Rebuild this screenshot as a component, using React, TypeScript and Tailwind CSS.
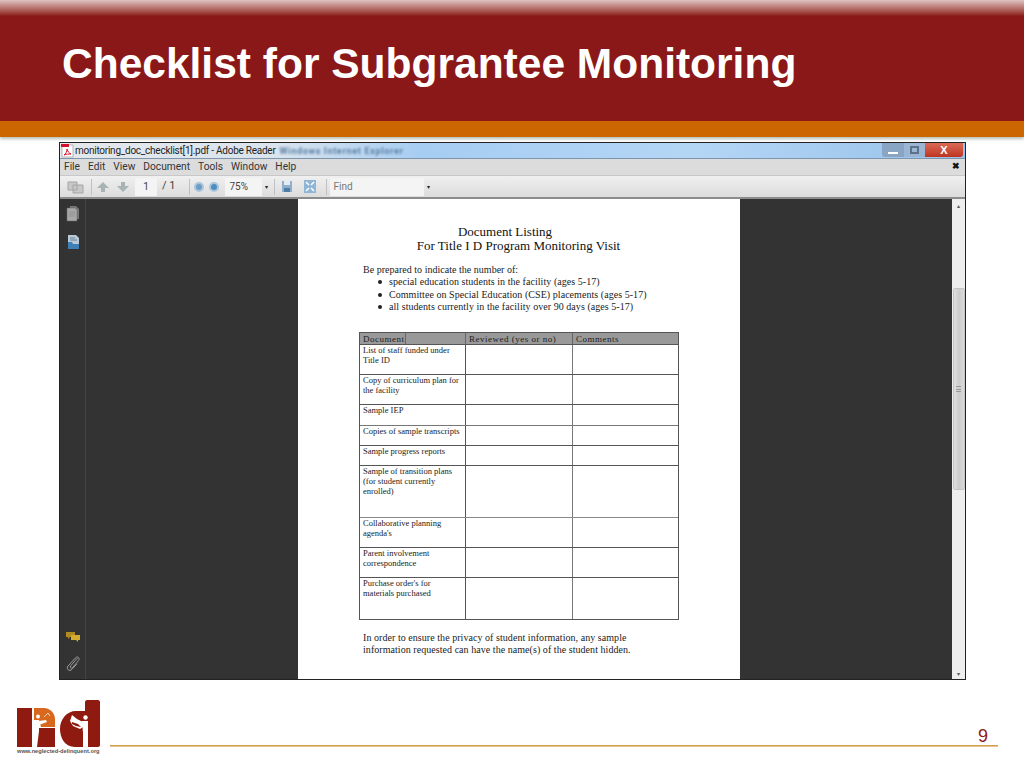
import React from 'react';

const serif = 'font-["Liberation_Serif",serif]';

const rows: [string[], string, string][] = [
  [['List of staff funded under', 'Title ID'], 'h-[30px]', 'border-[#555]'],
  [['Copy of curriculum plan for', 'the facility'], 'h-[30px]', 'border-[#555]'],
  [['Sample IEP'], 'h-[21px]', 'border-[#777]'],
  [['Copies of sample transcripts'], 'h-[20px]', 'border-[#555]'],
  [['Sample progress reports'], 'h-[20px]', 'border-[#555]'],
  [['Sample of transition plans', '(for student currently', 'enrolled)'], 'h-[52px]', 'border-[#888]'],
  [['Collaborative planning', "agenda's"], 'h-[30px]', 'border-[#555]'],
  [['Parent involvement', 'correspondence'], 'h-[30px]', 'border-[#555]'],
  [["Purchase order's for", 'materials purchased'], 'h-[41px]', 'border-[#555]'],
];

function SideIcon({ kind }: { kind: 'page' | 'doc' | 'chat' | 'clip' }) {
  if (kind === 'page') {
    return (
      <svg width="14" height="16" viewBox="0 0 14 16">
        <path d="M4 0h6l3 3v10H4z" fill="#777" />
        <path d="M1 2h8l2 2v11H1z" fill="#a8a8a8" stroke="#666" strokeWidth="0.500" />
        <path d="M3 6h6M3 8h6M3 10h6" stroke="#8a8a8a" strokeWidth="0.700" />
      </svg>
    );
  }
  if (kind === 'doc') {
    return (
      <svg width="14" height="16" viewBox="0 0 14 16">
        <path d="M2 1h8l3 3v11H2z" fill="#b9c9d8" />
        <path d="M2 8h4l1 2h6v5H2z" fill="#3f7fb5" />
        <path d="M4 4h5M4 6h7" stroke="#6a8298" />
      </svg>
    );
  }
  if (kind === 'chat') {
    return (
      <svg width="16" height="12" viewBox="0 0 16 12">
        <path d="M1 1h9v5H5L3 8V6H1z" fill="#b08c1e" />
        <path d="M6 4h9v5h-2v2l-2-2H6z" fill="#d3ad30" />
      </svg>
    );
  }
  return (
    <svg width="16" height="18" viewBox="0 0 16 18" fill="none">
      <path d="M12.500 4 5.500 12c-1.200 1.500.8 3 2 1.600l6-7c2-2.400-1-5-3-2.800L3 12c-2.400 3 1.500 6 4 3.300l5-5.500" stroke="#9a9a9a" strokeWidth="1" />
    </svg>
  );
}

function Logo() {
  return (
    <div className="flex flex-col items-start w-[84px] ml-[1px]">
      <svg width="84" height="47" viewBox="0 0 84 47">
        {/* n */}
        <path d="M0 8h15v39H0z" fill="#8e1a10" />
        <path d="M20 28h18v19H20z" fill="#8e1a10" />
        <path d="M17 8h10c6 0 11 5 11 11v8H24l-2-7h-5z" fill="#d9681f" />
        <circle cx="21" cy="16.500" r="2" fill="#fff" />
        <path d="M15 21h7l7-1 1 2-8 3v6l-2 16h-3l-1-16-1-4z" fill="#fff" />
        <path d="M27 17l4-4 2 3" fill="none" stroke="#fff" strokeWidth="0.700" />
        {/* d */}
        <path d="M68 2c0-1 1-2 2-2h11c1 0 2 1 2 2v43c0 1-1 2-2 2H58c-10 0-15-9-15-18 0-10 7-18 16-18h9z" fill="#8e1a10" />
        <circle cx="68.500" cy="17.500" r="2.200" fill="#fff" />
        <path d="M65 21h6v26h-5V33z" fill="#fff" />
        <path d="M55 15l5 4 6 3v5l-3 2-7-3-3-5z" fill="#fff" />
        <path d="M55 22l6 2 3 3-5-1-4-2z" fill="#8e1a10" />
      </svg>
      <span className="text-[5.700px] leading-[8px] font-bold text-[#555] font-['Liberation_Sans',sans-serif] whitespace-nowrap">
        www.neglected-delinquent.org
      </span>
    </div>
  );
}

export default function App() {
  return (
    <div className="w-[1024px] h-[768px] bg-white flex flex-col overflow-hidden font-['Liberation_Sans',sans-serif]">
      {/* slide header */}
      <div className="h-[137px] shrink-0 flex flex-col shadow-[0_2px_3px_rgba(90,110,90,0.45)]">
        <div className="h-[16px] bg-gradient-to-b from-[#dcc4c4] to-[#8b1a1a]" />
        <div className="h-[105px] bg-[#8b1819] pl-[62px] pt-[22px]">
          <h1 className="text-[42.500px] leading-[52px] font-bold text-white whitespace-nowrap">Checklist for Subgrantee Monitoring</h1>
        </div>
        <div className="h-[16px] bg-[#cc6600]" />
      </div>

      {/* screenshot of the reader window */}
      <div className="ml-[59px] mt-[5px] w-[907px] h-[538px] border border-[#222] flex flex-col shrink-0 text-[#333]">
        <div className="h-[16px] shrink-0 flex items-center justify-between bg-[linear-gradient(90deg,#e4e8ec_0%,#d9e4ee_24%,#a6cdf2_40%,#b4d6f5_70%,#98c2ea_100%)] border-b border-[#7d95ad]">
          <div className="flex items-center gap-[1px] pl-[1px]">
            <svg width="13" height="14" viewBox="0 0 13 14">
              <path d="M1 1h11v12H1z" fill="#fff" stroke="#999" strokeWidth="0.700" />
              <path d="M0 0h8v3H0z" fill="#d3132b" />
              <path d="M3 11c2-1 3-4 3-6 1 3 2 4 4 5-2 0-5 0-7 1z" fill="none" stroke="#d3132b" />
            </svg>
            <span className="text-[10px] tracking-[-0.25px] leading-[14px] text-[#222] font-['Roboto',sans-serif] whitespace-nowrap">monitoring_doc_checklist[1].pdf - Adobe Reader</span>
            <span className="ml-[3px] text-[9px] leading-[14px] text-[#5a7da3] blur-[1px] font-['Roboto',sans-serif] font-bold whitespace-nowrap tracking-[0.7px]">Windows Internet Explorer</span>
          </div>
          <div className="flex items-start h-full pr-[2px]">
            <div className="w-[22px] h-[14px] bg-[#8aa5c4] rounded-bl-[3px] flex items-end justify-center pb-[3px]">
              <div className="w-[10px] h-[2px] bg-white" />
            </div>
            <div className="w-[21px] h-[14px] bg-[#9ab6d4] flex items-center justify-center">
              <div className="w-[9px] h-[8px] border-2 border-[#5d7288]" />
            </div>
            <div className="w-[38px] h-[14px] bg-gradient-to-b from-[#d96a56] to-[#bf3320] rounded-br-[3px] flex items-center justify-center text-white text-[11px] leading-none font-bold">
              X
            </div>
          </div>
        </div>

        <div className="h-[17px] shrink-0 flex items-center bg-[#dcdcdc] pl-[4px] pr-[5px] border-b border-[#c8c8c8] text-[10.200px] text-[#333] font-['Roboto',sans-serif] gap-[8px]">
          <span>File</span>
          <span>Edit</span>
          <span>View</span>
          <span>Document</span>
          <span>Tools</span>
          <span>Window</span>
          <span>Help</span>
          <span className="ml-auto text-[9px] font-bold text-[#111]">✖</span>
        </div>

        <div className="h-[23px] shrink-0 flex items-center bg-gradient-to-b from-[#f0f0f0] to-[#dcdcdc] border-b-2 border-[#8c8c8c] pl-[7px] font-['Roboto',sans-serif] text-[10px] text-[#444]">
          <svg width="18" height="14" viewBox="0 0 18 14" className="mr-[6px]">
            <path d="M1 2h9v8H1zM6 5h10v8H6z" fill="#c8c8c8" stroke="#a5a5a5" />
          </svg>
          <div className="w-px h-[16px] bg-[#c0c0c0] mr-[4px]" />
          <svg width="36" height="12" viewBox="0 0 36 12" className="mr-[3px]">
            <path d="M7 1l6 6H9v4H5V7H1zM27 11l6-6h-4V1h-4v4h-4z" fill="#a8b4b4" />
          </svg>
          <div className="w-[22px] h-[18px] bg-[#f4f4f4] flex items-center justify-center mr-[5px]">1</div>
          <span className="mr-[14px] text-[11px]">/ 1</span>
          <div className="w-px h-[16px] bg-[#c0c0c0] mr-[4px]" />
          <div className="w-[10px] h-[10px] rounded-full bg-[#6d9cc4] border-2 border-[#a9c6de] mr-[5px]" />
          <div className="w-[10px] h-[10px] rounded-full bg-[#4f8cc0] border-2 border-[#a9c6de] mr-[6px]" />
          <div className="w-[37px] h-[18px] bg-[#f4f4f4] flex items-center pl-[4px] mr-[1px]">75%</div>
          <span className="text-[6px] mx-[2px] text-[#222]">▾</span>
          <div className="w-px h-[16px] bg-[#c0c0c0] ml-[4px] mr-[6px]" />
          <svg width="12" height="13" viewBox="0 0 12 13" className="mr-[11px]">
            <path d="M1 1h10v11H1z" fill="#8fb0cc" />
            <path d="M3 1h6v4H3z" fill="#e6edf2" />
            <path d="M3 8h6v4H3z" fill="#4d7ea6" />
          </svg>
          <svg width="12" height="13" viewBox="0 0 12 13" className="mr-[10px]">
            <path d="M0 0h12v13H0z" fill="#8fb6d6" />
            <path d="M2 2l3 3M10 2L7 5M2 11l3-3M10 11L7 8" stroke="#fff" strokeWidth="1.500" />
          </svg>
          <div className="w-px h-[16px] bg-[#c0c0c0] mr-[3px]" />
          <div className="w-[94px] h-[18px] bg-[#f4f4f4] flex items-center pl-[3px] text-[#777]">Find</div>
          <span className="text-[6px] ml-[3px] text-[#222]">▾</span>
        </div>

        <div className="flex-1 min-h-0 flex bg-[#333333]">
          <div className="w-[26px] shrink-0 border-r border-[#444] flex flex-col items-center justify-between pt-[7px] pb-[7px]">
            <div className="flex flex-col items-center gap-[12px]">
              <SideIcon kind="page" />
              <SideIcon kind="doc" />
            </div>
            <div className="flex flex-col items-center gap-[11px]">
              <SideIcon kind="chat" />
              <SideIcon kind="clip" />
            </div>
          </div>

          <div className="flex-1 flex justify-center pl-[1px] pr-[1px]">
            <div className={`w-[442px] bg-white text-[#222] pl-[65px] ${serif}`}>
              <div className="pt-[26px] ml-[-5px] w-[321px] text-center text-[13px] leading-[14px] text-[#111]">
                <p className="pr-[27px]">Document Listing</p>
                <p>For Title I D Program Monitoring Visit</p>
              </div>
              <p className="mt-[11px] text-[10px] leading-[12px] tracking-[0.02px]">Be prepared to indicate the number of:</p>
              <ul className="text-[10px] leading-[12.500px] tracking-[0.05px]">
                {[
                  'special education students in the facility (ages 5-17)',
                  'Committee on Special Education (CSE) placements (ages 5-17)',
                  'all students currently in the facility over 90 days (ages 5-17)',
                ].map((t) => (
                  <li key={t} className="flex items-center">
                    <span className="w-[4px] h-[4px] rounded-full bg-[#222] ml-[15px] mr-[7px] shrink-0" />
                    {t}
                  </li>
                ))}
              </ul>

              <div className="mt-[18px] ml-[-4px] w-[320px] border border-[#555] text-[8.500px] leading-[10px]">
                <div className="flex h-[12px] bg-[#999] border-b border-[#555] text-[9px] tracking-[0.5px] leading-[12px]">
                  <div className="w-[106px] border-r border-[#666] pl-[3px]"><span className="inline-block h-full border-r border-[#666]">Document</span></div>
                  <div className="w-[107px] border-r border-[#666] pl-[3px]">Reviewed (yes or no)</div>
                  <div className="flex-1 pl-[3px]">Comments</div>
                </div>
                {rows.map(([lines, h, bc], i) => (
                  <div key={i} className={`flex ${h} ${i < rows.length - 1 ? 'border-b' : ''} ${bc}`}>
                    <div className="w-[106px] border-r border-[#555] pl-[3px]">
                      {lines.map((l) => (
                        <div key={l} className="whitespace-nowrap">{l}</div>
                      ))}
                    </div>
                    <div className="w-[107px] border-r border-[#777]" />
                    <div className="flex-1" />
                  </div>
                ))}
              </div>

              <p className="mt-[12px] text-[10px] leading-[12px] tracking-[0.05px] whitespace-nowrap">In order to ensure the privacy of student information, any sample</p>
              <p className="text-[10px] leading-[12px] tracking-[0.05px] whitespace-nowrap">information requested can have the name(s) of the student hidden.</p>
            </div>
          </div>

          <div className="w-[13px] shrink-0 bg-[#eeeeee] flex flex-col items-center text-[#555]">
            <div className="h-[10px] text-[6px] leading-[10px] mt-[2px]">▴</div>
            <div className="mt-[77px] w-[12px] h-[202px] bg-gradient-to-r from-[#e0e0e0] via-[#cccccc] to-[#dadada] border border-[#c4c4c4] rounded-[2px] flex items-center justify-center">
              <div className="w-[5px] h-[6px] border-y border-[#999] flex items-center"><div className="w-full h-px bg-[#999]" /></div>
            </div>
            <div className="mt-auto h-[10px] text-[6px] leading-[10px]">▾</div>
          </div>
        </div>
      </div>

      {/* slide footer */}
      <div className="flex items-start pl-[16px] pt-[20px]">
        <Logo />
        <div className="relative ml-[9px] mt-[45px] w-[888px] h-[2px] bg-gradient-to-b from-[#c98a1f] to-[#f0d8b0]">
          <span className="absolute right-[10px] bottom-[2px] text-[18px] leading-[18px] text-[#8b1a1a]">9</span>
        </div>
      </div>
    </div>
  );
}
